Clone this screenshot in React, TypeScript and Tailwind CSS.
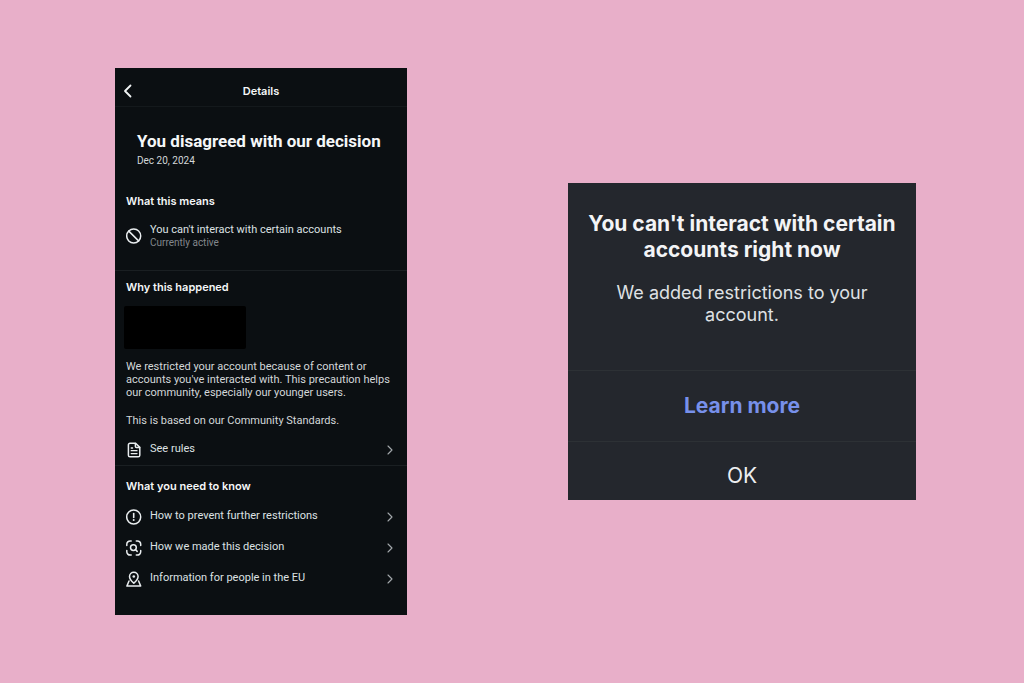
import type { ReactNode } from "react";

type IconProps = { children: ReactNode };

function Icon({ children }: IconProps) {
  return (
    <svg
      viewBox="0 0 16 16"
      className="size-4 shrink-0 text-[#e9edef]"
      fill="none"
      stroke="currentColor"
      strokeWidth="1.5"
      strokeLinecap="round"
      strokeLinejoin="round"
      aria-hidden="true"
    >
      {children}
    </svg>
  );
}

function BlockedIcon() {
  return (
    <Icon>
      <circle cx="7.7" cy="8" r="7" />
      <path d="M2.8 3.1 12.6 12.9" />
    </Icon>
  );
}

function RulesIcon() {
  return (
    <Icon>
      <path d="M4 1.200h5.600l4.200 4.200v7.800a1.600 1.600 0 0 1-1.600 1.600H4a1.600 1.600 0 0 1-1.600-1.600V2.800A1.600 1.600 0 0 1 4 1.200Z" />
      <path d="M9.400 1.400v3.200a1 1 0 0 0 1 1h3.200" />
      <path d="M5.200 6h1.400M5.200 8.700h5.800M5.200 11.600h5.800" strokeWidth="1.300" />
    </Icon>
  );
}

function AlertIcon() {
  return (
    <Icon>
      <circle cx="7.700" cy="8" r="7" />
      <path d="M7.700 4.600v3.800" strokeWidth="1.600" />
      <circle cx="7.700" cy="10.900" r="1" fill="currentColor" stroke="none" />
    </Icon>
  );
}

function ScanIcon() {
  return (
    <Icon>
      <path d="M.8 5.400V4.200A3.300 3.300 0 0 1 4.100.9h1.100M10.300.9h1.100a3.300 3.300 0 0 1 3.300 3.300v1.200M14.700 10.600v1.200a3.300 3.300 0 0 1-3.300 3.300h-1.100M5.200 15.100H4.100a3.300 3.300 0 0 1-3.300-3.300v-1.200" />
      <circle cx="7.400" cy="7.600" r="2.900" />
      <path d="m9.600 9.800 1.600 1.600" />
    </Icon>
  );
}

function LocationIcon() {
  return (
    <Icon>
      <path d="M7.800 12.200c-1.500-1.300-4.300-3.700-4.300-6.700a4.300 4.300 0 0 1 8.600 0c0 3-2.800 5.400-4.300 6.700Z" />
      <circle cx="7.800" cy="5.500" r="1.300" fill="currentColor" stroke="none" />
      <path d="M3 10 .9 15.100h13.800L12.600 10" />
    </Icon>
  );
}

function Chevron() {
  return (
    <svg
      viewBox="0 0 6 10"
      className="h-2.5 w-1.5 shrink-0 text-[#a3a8ab]"
      fill="none"
      stroke="currentColor"
      strokeWidth="1.1"
      strokeLinecap="round"
      strokeLinejoin="round"
      aria-hidden="true"
    >
      <path d="M1 1 5 5 1 9" />
    </svg>
  );
}

function LinkRow({ icon, label }: { icon: ReactNode; label: string }) {
  return (
    <a href="#" className="flex h-[31px] items-center gap-2 pr-[3px] text-[11px] text-[#dde1e3]">
      {icon}
      <span className="flex-1">{label}</span>
      <Chevron />
    </a>
  );
}

function SectionTitle({ children }: { children: ReactNode }) {
  return (
    <h2 className="font-['Inter',sans-serif] text-[11px] leading-4 font-semibold text-[#f5f7f8]">
      {children}
    </h2>
  );
}

function DetailsScreen() {
  return (
    <section className="w-full max-w-[292px] bg-[#0b0f12] font-['Roboto',sans-serif]">
      <header className="grid h-[39px] grid-cols-[1fr_auto_1fr] items-center border-b border-[#14191c] px-2 pt-2">
        <button type="button" aria-label="Back" className="justify-self-start text-[#f1f4f5]">
          <svg
            viewBox="0 0 10 14"
            className="h-3.5 w-2.5"
            fill="none"
            stroke="currentColor"
            strokeWidth="1.8"
            strokeLinecap="round"
            strokeLinejoin="round"
            aria-hidden="true"
          >
            <path d="M7.500 1.500 2 7l5.500 5.500" />
          </svg>
        </button>
        <span className="font-['Inter',sans-serif] text-[11px] leading-4 font-semibold text-[#f5f7f8]">
          Details
        </span>
      </header>

      <div className="border-b border-[#1a1f22] px-[11px] pt-6 pb-[21px]">
        <div className="px-[11px]">
          <h1 className="text-[17px] leading-5 font-bold text-[#f5f7f8]">
            You disagreed with our decision
          </h1>
          <p className="mt-0.5 text-[10px] leading-4 text-[#d3d7d9]">Dec 20, 2024</p>
        </div>
        <div className="mt-6">
          <SectionTitle>What this means</SectionTitle>
        </div>
        <div className="mt-3.5 flex items-center gap-2">
          <BlockedIcon />
          <div>
            <p className="text-[11px] leading-[14px] text-[#dde1e3]">
              You can't interact with certain accounts
            </p>
            <p className="text-[10px] leading-3 text-[#82878c]">Currently active</p>
          </div>
        </div>
      </div>

      <div className="border-b border-[#1a1f22] px-[11px] pt-2">
        <SectionTitle>Why this happened</SectionTitle>
        <div className="mt-[11px] -ml-[2px] h-[43px] w-[122px] rounded-xs bg-black" />
        <div className="mt-[11px] text-[11px] leading-[13px] text-[#d3d7d9]">
          <p>
            We restricted your account because of content or accounts you've interacted with. This
            precaution helps our community, especially our younger users.
          </p>
          <p className="mt-[15px]">This is based on our Community Standards.</p>
        </div>
        <div className="mt-[7px]">
          <LinkRow icon={<RulesIcon />} label="See rules" />
        </div>
      </div>

      <div className="px-[11px] pt-3 pb-[21px]">
        <SectionTitle>What you need to know</SectionTitle>
        <nav className="mt-[7px]">
          <LinkRow icon={<AlertIcon />} label="How to prevent further restrictions" />
          <LinkRow icon={<ScanIcon />} label="How we made this decision" />
          <LinkRow icon={<LocationIcon />} label="Information for people in the EU" />
        </nav>
      </div>
    </section>
  );
}

function RestrictionDialog() {
  return (
    <section
      role="dialog"
      aria-labelledby="restriction-title"
      className="w-full max-w-[348px] bg-[#24272d] text-center font-['Inter',sans-serif]"
    >
      <div className="px-4 pt-7 pb-11">
        <h2 id="restriction-title" className="text-[21px] leading-[26px] font-bold text-[#f3f4f6]">
          You can't interact with certain accounts right now
        </h2>
        <p className="mt-[19px] px-6 text-[18px] leading-[22px] text-[#dfe1e4]">
          We added restrictions to your account.
        </p>
      </div>
      <button
        type="button"
        className="h-[71px] w-full border-t border-[#2d3135] text-[21px] font-bold text-[#7790ea]"
      >
        Learn more
      </button>
      <button
        type="button"
        className="h-[59px] w-full border-t border-[#2d3135] pt-2.5 text-[21px] text-[#eceef0]"
      >
        OK
      </button>
    </section>
  );
}

export default function App() {
  return (
    <main className="flex min-h-screen items-center justify-between gap-8 bg-[#e8afc9] pr-[108px] pl-[115px]">
      <DetailsScreen />
      <RestrictionDialog />
    </main>
  );
}
